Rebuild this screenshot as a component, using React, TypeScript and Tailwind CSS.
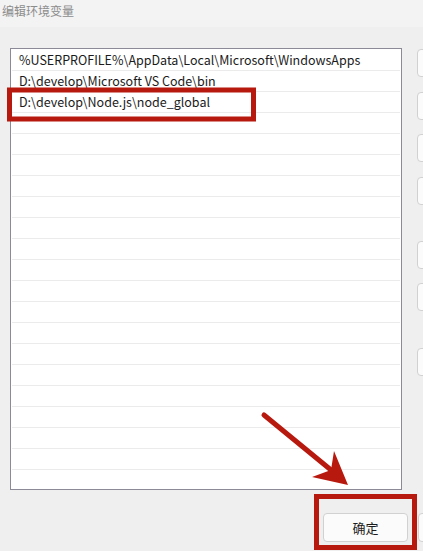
import React from "react";

const paths = [
  "%USERPROFILE%\\AppData\\Local\\Microsoft\\WindowsApps",
  "D:\\develop\\Microsoft VS Code\\bin",
  "D:\\develop\\Node.js\\node_global",
];

// total rows drawn in the list, the rest are empty
const ROW_COUNT = 21;

// side buttons: top margin before each one (px)
const sideButtons = ["mt-px", "mt-[15px]", "mt-[14px]", "mt-[15px]", "mt-[36px]", "mt-[14px]", "mt-[37px]"];

function SideButton({ className }: { className: string }) {
  return <div className={`${className} h-[28px] w-[80px] shrink-0 rounded-[4px] border border-[#d1d1d1] bg-[#fbfbfb]`} />;
}

// red annotation layer drawn over the dialog
function Annotations() {
  return (
    <svg className="pointer-events-none absolute left-0 top-0" width={423} height={551} viewBox="0 0 423 551">
      <rect x={9.5} y={90} width={244} height={29} fill="none" stroke="#b8190f" strokeWidth={5} />
      <rect x={316.5} y={496.5} width={98} height={51} fill="none" stroke="#b8190f" strokeWidth={5} />
      <line x1={264} y1={415} x2={331} y2={470} stroke="#b8190f" strokeWidth={5} strokeLinecap="round" />
      <polygon points="334,451 348,485 312,477 331,470" fill="#b8190f" />
    </svg>
  );
}

export default function App() {
  const rows = Array.from({ length: ROW_COUNT }, (_, i) => paths[i] ?? "");

  return (
    <div
      className="relative flex h-[551px] w-[423px] flex-col overflow-hidden bg-[#efefef] text-[12.5px] text-[#1b1b1b]"
      style={{ fontFamily: '"Noto Sans CJK SC", "Noto Sans", sans-serif' }}
    >
      {/* title bar */}
      <div className="h-[27px] shrink-0 bg-[#f3f3f3] pl-[2px] pt-[2px] text-[12px] leading-[18px] text-[#8c8c8c]">编辑环境变量</div>

      <div className="flex pt-[21px]">
        {/* path list */}
        <div className="ml-[10px] h-[442px] w-[392px] shrink-0 overflow-hidden border border-[#8b8a96] bg-white px-px pt-px">
          {rows.map((p, i) => (
            <div key={i} className="flex h-[21px] items-center border-b border-[#ebebeb] pl-[7px] leading-none">
              {p}
            </div>
          ))}
        </div>

        {/* side buttons */}
        <div className="ml-[15px] flex flex-col">
          {sideButtons.map((m, i) => (
            <SideButton key={i} className={m} />
          ))}
        </div>
      </div>

      {/* bottom buttons */}
      <div className="mt-[23px] flex">
        <div className="ml-[323px] flex h-[29px] w-[85px] shrink-0 items-center justify-center rounded-[4px] border border-[#d1d1d1] bg-[#fbfbfb] text-[13px]">
          确定
        </div>
        <div className="ml-[10px] h-[29px] w-[85px] shrink-0 rounded-[4px] border border-[#d1d1d1] bg-[#fbfbfb]" />
      </div>

      <Annotations />
    </div>
  );
}
